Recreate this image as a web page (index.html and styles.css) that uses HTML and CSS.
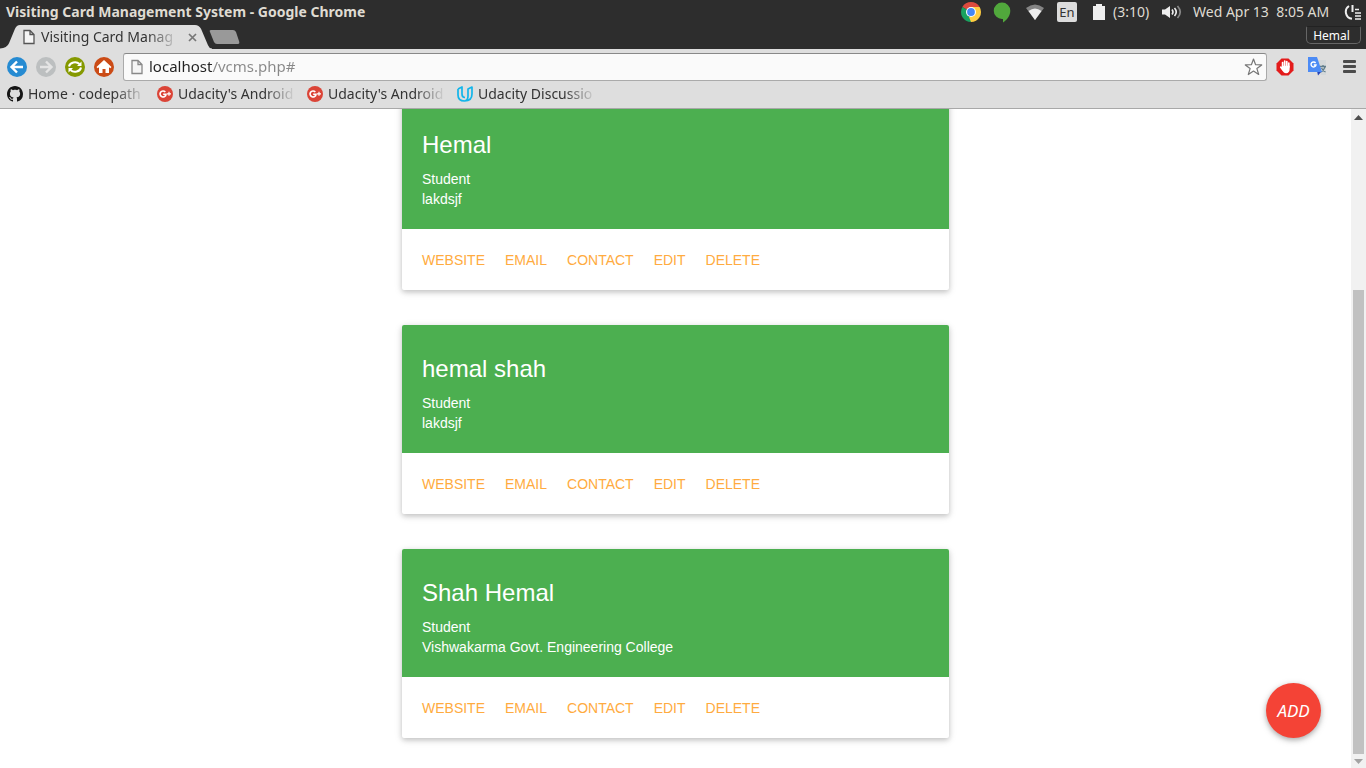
FILE: index.html
```html
<!DOCTYPE html>
<html lang="en">
<head>
<meta charset="utf-8">
<title>Visiting Card Management System</title>
<link rel="stylesheet" href="styles.css">
</head>
<body>
<svg class="symbols" aria-hidden="true">
  <symbol id="page" viewBox="0 0 12 16"><path d="M1 1.500h6l4 4v9H1zM7 1.500v4h4" fill="#f5f5f5" stroke="currentColor" stroke-width="1.300"/></symbol>
  <symbol id="gplus" viewBox="0 0 16 16"><circle cx="8" cy="8" r="8" fill="#db4437"/><path d="M8.300 6A3 3 0 1 0 9 8.300H6.200" fill="none" stroke="#fff" stroke-width="1.600"/><path d="M12 5.800v4M10 7.800h4" stroke="#fff" stroke-width="1.200"/></symbol>
</svg>

<div class="desktop-bar">
  <span class="window-title">Visiting Card Management System - Google Chrome</span>
  <div class="indicators">
    <svg width="20" height="20" viewBox="0 0 20 20"><path d="M10 10L1.340 5A10 10 0 0 1 18.660 5z" fill="#dd4b3e"/><path d="M10 10L18.660 5A10 10 0 0 1 10 20z" fill="#ffcd40"/><path d="M10 10V20A10 10 0 0 1 1.340 5z" fill="#1aa260"/><path d="M10 5h8.660L14 12z" fill="#ffcd40"/><path d="M14.300 12.500L10 20 8 15z" fill="#ffcd40"/><circle cx="10" cy="10" r="5" fill="#fff"/><circle cx="10" cy="10" r="3.900" fill="#4687f4"/></svg>
    <svg class="ind-chat" width="18" height="21" viewBox="0 0 18 21"><path d="M9 .5a8.300 8.300 0 0 1 8.300 8.300c0 5-3.300 9.200-7.300 11.700V17H9A8.250 8.250 0 0 1 9 .5z" fill="#51a83c"/></svg>
    <svg width="18" height="16" viewBox="0 0 18 16"><path d="M0 4Q9-3 18 4L9 16z" fill="#858585"/><path d="M2.500 7Q9 2 15.500 7L9 16z" fill="#eee"/></svg>
    <button class="lang">En</button>
    <svg class="ind-battery" width="12" height="16" viewBox="0 0 12 16"><path d="M3 0h6v2h3v14H0V2h3z" fill="#eee"/></svg>
    <span class="battery-time">(3:10)</span>
    <svg width="20" height="14" viewBox="0 0 20 14"><path d="M0 4.500h3L8 1v12L3 9.500H0z" fill="#eee"/><path d="M10 4.500q2 2.500 0 5M12.500 3q3.500 4 0 8" fill="none" stroke="#eee" stroke-width="1.600"/><path d="M15.500 1q5.500 6 0 12" fill="none" stroke="#888" stroke-width="1.700"/></svg>
    <time class="clock">Wed Apr 13&nbsp; 8:05 AM</time>
    <svg width="18" height="16" viewBox="0 0 18 16"><path d="M5 2a7 7 0 0 0 3 12.800M8.500 1v7" fill="none" stroke="#eee" stroke-width="2"/><path d="M11 5.500h4M11 9h6M11 12h6M11 15h6" stroke="#eee" stroke-width="1.600"/></svg>
  </div>
</div>

<div class="tab-strip">
  <div class="tab">
    <svg class="tab-shape" viewBox="0 0 212 25" preserveAspectRatio="none"><path d="M0 24.500Q7 24 9 19L15 4Q16.500 0 20 0H195Q199 0 201 4L208 21Q209 24 212 24.500V25H0z" fill="#dedede"/></svg>
    <svg class="page-icon" width="12" height="16"><use href="#page"/></svg>
    <span class="tab-title">Visiting Card Manag</span>
    <button class="tab-close" aria-label="Close tab"><svg width="9" height="9" viewBox="0 0 9 9"><path d="M1 1l7 7M8 1L1 8" stroke="#777" stroke-width="1.700"/></svg></button>
  </div>
  <button class="new-tab" aria-label="New tab"><svg width="31" height="14" viewBox="0 0 31 14"><path d="M2 0h22q2 0 3 2l3 9q1 3-1 3H8q-2 0-3-2L1 2Q0 0 2 0z" fill="#999"/></svg></button>
  <button class="profile">Hemal</button>
</div>

<div class="toolbar">
  <button aria-label="Back"><svg width="20" height="20" viewBox="0 0 20 20"><circle cx="10" cy="10" r="10" fill="#268bd2"/><path d="M16 10H5M10 4.500L4.500 10l5.500 5.500" fill="none" stroke="#fff" stroke-width="2.400"/></svg></button>
  <button aria-label="Forward"><svg width="20" height="20" viewBox="0 0 20 20"><circle cx="10" cy="10" r="10" fill="#bcbfc0"/><path d="M4 10h11M10 4.500l5.500 5.500-5.500 5.500" fill="none" stroke="#e4e4e4" stroke-width="2.400"/></svg></button>
  <button aria-label="Reload"><svg width="20" height="20" viewBox="0 0 20 20"><circle cx="10" cy="10" r="10" fill="#859900"/><path d="M4 9.500a6 5 0 0 1 10.500-2.500M16 10.500a6 5 0 0 1-10.500 2.500" fill="none" stroke="#fff" stroke-width="2"/><path d="M16.500 4.500V9H12zM3.500 15.500V11H8z" fill="#fff"/></svg></button>
  <button aria-label="Home"><svg width="20" height="20" viewBox="0 0 20 20"><circle cx="10" cy="10" r="10" fill="#cb4b16"/><path d="M10 3l7.500 7-1.200 1.200L15 10.200V16h-3.500v-4h-3v4H5v-5.800l-1.300 1L2.500 10z" fill="#fff"/></svg></button>
  <div class="omnibox">
    <svg class="page-icon soft" width="12" height="16"><use href="#page"/></svg>
    <input class="address" type="text" aria-label="Address" value="localhost/vcms.php#">
    <button aria-label="Bookmark this page"><svg width="19" height="18" viewBox="0 0 19 18"><path d="M9.500 1l2.100 5.700 6.100.2-4.800 3.700 1.800 5.900-5.200-3.500-5.200 3.500 1.800-5.900L1.300 6.900l6.100-.2z" fill="#fff" stroke="#777" stroke-width="1.200" stroke-linejoin="round"/></svg></button>
  </div>
  <div class="extensions">
    <button aria-label="Ad blocker"><svg width="18" height="18" viewBox="0 0 18 18"><path d="M5.500.5h7l5 5v7l-5 5h-7l-5-5v-7z" fill="#e31b1b"/><g fill="none" stroke="#fff" stroke-width="1.700" stroke-linecap="round"><path d="M6.600 9V4.600M8.700 8V3M10.800 8V3.600M12.800 9V5.200M4.800 9.200l2 2.600"/></g><path d="M5.800 7.800h7.850V11q0 4-3.600 4.300-2.700 0-4.250-4z" fill="#fff"/></svg></button>
    <button aria-label="Translate"><svg width="19" height="19" viewBox="0 0 19 19"><path d="M8 3h10v15h-5z" fill="#d4d8da"/><path d="M12 9.500h6M15 8v1.500M17 10q-1.500 4-4 5M13.500 11q1.500 3 4 4" fill="none" stroke="#607d8b" stroke-width="1.300"/><path d="M9 14h5l-4 4.500z" fill="#2444b8"/><path d="M0 0h9l5 15H0z" fill="#4c8bf5"/><path d="M7.600 6A2.500 2.500 0 1 0 8 8H5.800" fill="none" stroke="#fff" stroke-width="1.400"/></svg></button>
    <button aria-label="Menu"><svg width="13" height="13" viewBox="0 0 13 13"><path d="M1 1.500h11M1 6.500h11M1 11.500h11" stroke="#4b4b4b" stroke-width="2.800" stroke-linecap="round"/></svg></button>
  </div>
</div>

<nav class="bookmarks" aria-label="Bookmarks">
  <a href="#"><svg width="16" height="16" viewBox="0 0 16 16"><path fill="#151515" d="M8 0C3.580 0 0 3.580 0 8c0 3.540 2.290 6.530 5.470 7.590.4.070.55-.17.55-.38 0-.19-.01-.82-.01-1.490-2.010.37-2.530-.49-2.690-.94-.09-.23-.48-.94-.82-1.130-.28-.15-.68-.52-.01-.53.63-.01 1.080.58 1.230.82.72 1.210 1.870.87 2.330.66.07-.52.28-.87.51-1.070-1.780-.2-3.640-.89-3.640-3.950 0-.87.31-1.590.82-2.150-.08-.2-.36-1.020.08-2.120 0 0 .67-.21 2.200.82.64-.18 1.320-.27 2-.27s1.360.09 2 .27c1.530-1.040 2.200-.82 2.200-.82.44 1.100.16 1.920.08 2.120.51.56.82 1.270.82 2.150 0 3.070-1.870 3.750-3.650 3.950.29.25.54.73.54 1.480 0 1.070-.01 1.930-.01 2.200 0 .21.15.46.55.38A8 8 0 0 0 16 8c0-4.420-3.580-8-8-8z"/></svg><span>Home · codepath</span></a>
  <a href="#"><svg width="16" height="16"><use href="#gplus"/></svg><span>Udacity's Android</span></a>
  <a href="#"><svg width="16" height="16"><use href="#gplus"/></svg><span>Udacity's Android</span></a>
  <a href="#"><svg width="16" height="16" viewBox="0 0 16 16"><path d="M1 3l4-2v7q0 3.500 3 3.500M1 3v6q0 6 6.500 6M15 1l-4 2v7q0 4.500-3.500 5 7.500 0 7.500-7z" fill="none" stroke="#12b5ea" stroke-width="1.700" stroke-linejoin="round"/></svg><span>Udacity Discussio</span></a>
</nav>

<div class="viewport">
  <main class="page">
    <article class="card">
      <div class="card-content"><h2>Hemal</h2><p>Student<br>lakdsjf</p></div>
      <div class="card-action"><a href="#">Website</a><a href="#">Email</a><a href="#">Contact</a><a href="#">Edit</a><a href="#">Delete</a></div>
    </article>
    <article class="card">
      <div class="card-content"><h2>hemal shah</h2><p>Student<br>lakdsjf</p></div>
      <div class="card-action"><a href="#">Website</a><a href="#">Email</a><a href="#">Contact</a><a href="#">Edit</a><a href="#">Delete</a></div>
    </article>
    <article class="card">
      <div class="card-content"><h2>Shah Hemal</h2><p>Student<br>Vishwakarma Govt. Engineering College</p></div>
      <div class="card-action"><a href="#">Website</a><a href="#">Email</a><a href="#">Contact</a><a href="#">Edit</a><a href="#">Delete</a></div>
    </article>
  </main>
  <div class="scrollbar">
    <svg width="9" height="5" viewBox="0 0 9 5"><path d="M4.500 0L9 5H0z" fill="#505050"/></svg>
    <div class="track"><div class="thumb"></div></div>
    <svg width="9" height="5" viewBox="0 0 9 5"><path d="M0 0h9L4.500 5z" fill="#a3a3a3"/></svg>
  </div>
  <button class="fab">ADD</button>
</div>
</body>
</html>
```
FILE: styles.css
```css
* { box-sizing: border-box; }
body {
  margin: 0;
  height: 100vh;
  display: flex;
  flex-direction: column;
  overflow: hidden;
  background: #fff;
  font-family: "Noto Sans", "Open Sans", sans-serif;
  font-size: 14px;
  color: #333;
}
button { border: 0; padding: 0; background: none; font: inherit; color: inherit; display: flex; align-items: center; justify-content: center; }
a { text-decoration: none; color: inherit; }
svg { flex: none; display: block; }
.symbols { width: 0; height: 0; position: absolute; }

.desktop-bar {
  flex: none;
  height: 24px;
  padding: 0 4px 0 6px;
  display: flex;
  align-items: center;
  justify-content: space-between;
  background: #2d2d2d;
  color: #dfdbd2;
  white-space: nowrap;
}
.window-title, .battery-time, .clock { padding-bottom: 2px; }
.window-title { font-weight: 700; }
.indicators { display: flex; align-items: center; }
.ind-chat { margin: 0 15px 0 12px; }
.ind-battery { margin: 0 8px 0 16px; }
.lang { width: 20px; height: 20px; margin-left: 13px; border-radius: 2px; background: #dcdcdc; color: #333; font-size: 13px; }
.battery-time { width: 49px; }
.clock { width: 138px; margin: 0 13px 0 11px; }

.tab-strip { flex: none; height: 25px; display: flex; align-items: flex-start; background: #2d2d2d; padding-right: 5px; }
.tab { position: relative; width: 212px; height: 24px; margin-top: 1px; padding: 0 15px 0 23px; display: flex; align-items: center; }
.tab-shape { position: absolute; inset: 0; width: 100%; height: 100%; }
.page-icon { position: relative; color: #555; }
.soft { color: #888; }
.tab-title {
  position: relative;
  flex: 1;
  margin: 0 9px 0 6px;
  padding-bottom: 2px;
  overflow: hidden;
  white-space: nowrap;
  -webkit-mask-image: linear-gradient(to left, transparent, #000 32px);
  mask-image: linear-gradient(to left, transparent, #000 32px);
}
.tab-close { position: relative; }
.new-tab { margin: 6px 0 0 -3px; }
.profile { margin: 2px 0 0 auto; width: 55px; height: 18px; padding-right: 4px; border: 1px solid #666; border-top-color: #222; border-radius: 2px 2px 5px 5px; color: #fff; font-size: 12px; }

.toolbar { flex: none; height: 32px; padding: 3px 10px 0 7px; display: flex; align-items: center; gap: 9px; background: #dedede; }
.omnibox { flex: 1; height: 28px; padding: 0 3px 0 7px; display: flex; align-items: center; border: 1px solid #aaa; border-top-color: #888; border-radius: 3px; background: #fafafa; }
.address {
  flex: 1;
  min-width: 0;
  margin: 0 0 0 6px;
  padding: 0 0 2px;
  border: 0;
  outline: 0;
  font: inherit;
  font-size: 15px;
  color: transparent;
  background: linear-gradient(to right, #222 64px, #888 64px);
  -webkit-background-clip: text;
  background-clip: text;
}
.extensions { display: flex; align-items: center; gap: 14px; }
.extensions button:last-child { margin-left: 2px; }

.bookmarks { flex: none; height: 28px; padding: 0 7px 1px; display: flex; align-items: center; background: #dedede; border-bottom: 1px solid #a8a8a8; }
.bookmarks a { width: 150px; display: flex; align-items: center; gap: 5px; padding-right: 11px; }
.bookmarks span {
  flex: 1;
  padding-bottom: 1px;
  overflow: hidden;
  white-space: nowrap;
  -webkit-mask-image: linear-gradient(to left, transparent, #000 32px);
  mask-image: linear-gradient(to left, transparent, #000 32px);
}

.viewport { position: relative; flex: 1; min-height: 0; display: flex; overflow: hidden; font-family: "Liberation Sans", Arial, sans-serif; }
.page { flex: 1; display: flex; flex-direction: column; justify-content: flex-end; align-items: center; gap: 35px; padding-bottom: 30px; }
.card { width: 41%; max-width: 547px; flex: none; border-radius: 2px; background: #fff; box-shadow: 0 2px 5px rgba(0, 0, 0, .16), 0 2px 8px rgba(0, 0, 0, .12); }
.card-content { padding: 20px; background: #4caf50; color: #fff; border-radius: 2px 2px 0 0; }
.card-content h2 { margin: 0; font-size: 24px; font-weight: 400; line-height: 48px; }
.card-content p { margin: 0; line-height: 20px; }
.card-action { display: flex; gap: 20px; padding: 21px 20px 20px; line-height: 20px; text-transform: uppercase; color: #ffab40; }

.scrollbar { width: 15px; padding: 6px 0 4px; display: flex; flex-direction: column; align-items: center; background: #f1f1f1; }
.track { flex: 1; width: 11px; margin: 3px 0 5px; display: flex; align-items: flex-end; }
.thumb { width: 100%; height: 73.5%; background: #c1c1c1; }

.fab { position: absolute; right: 45px; bottom: 30px; width: 55px; height: 55px; border-radius: 50%; background: #f44336; color: #fff; font: italic 17px "Noto Sans", sans-serif; box-shadow: 0 2px 5px rgba(0, 0, 0, .25), 0 2px 8px rgba(0, 0, 0, .12); }
```
